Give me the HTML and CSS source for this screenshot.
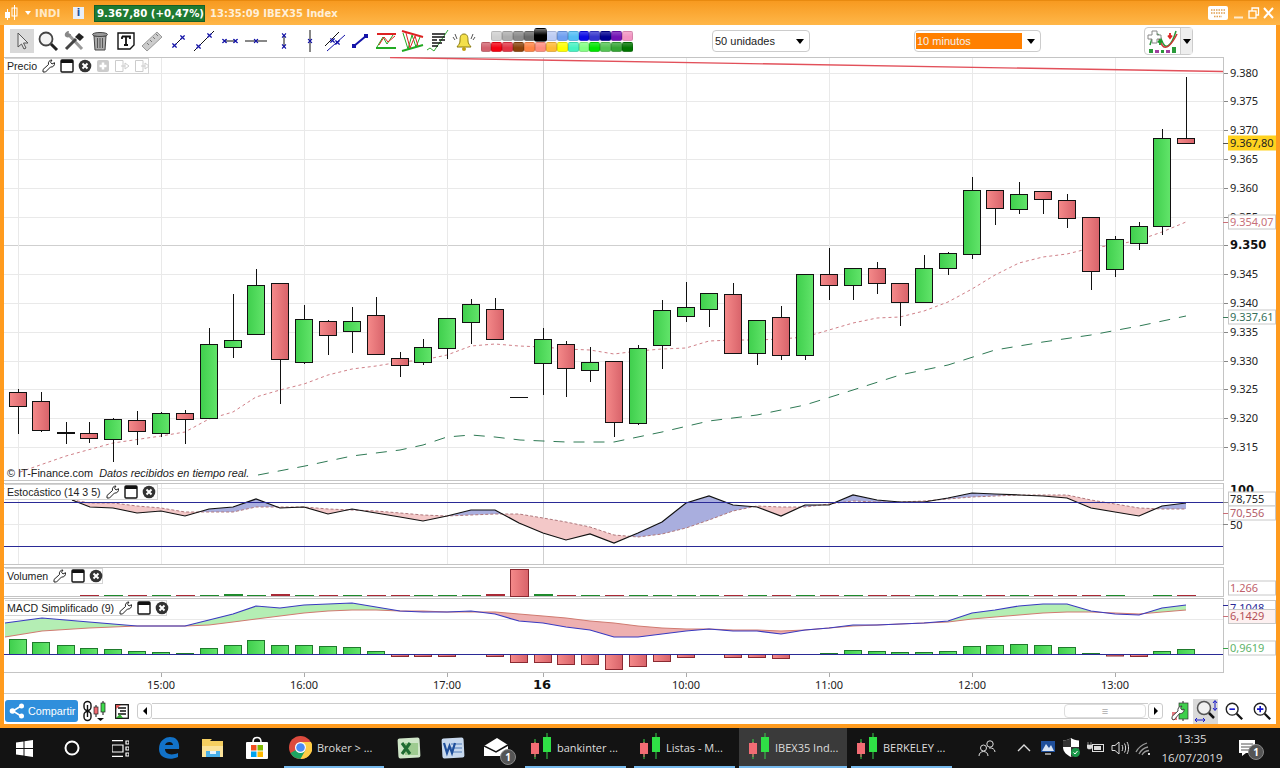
FILE: index.html
```html
<!DOCTYPE html>
<html lang="es">
<head>
<meta charset="utf-8">
<title>IBEX35 Index</title>
<link rel="stylesheet" href="styles.css">
</head>
<body>
<svg class="defs" width="0" height="0" aria-hidden="true">
  <defs>
    <linearGradient id="gr" x1="0" x2="1" y1="0" y2="0"><stop offset="0" stop-color="#f58a8a"/><stop offset="1" stop-color="#d8636a"/></linearGradient>
    <linearGradient id="gg" x1="0" x2="1" y1="0" y2="0"><stop offset="0" stop-color="#3fcf4d"/><stop offset="1" stop-color="#62e46a"/></linearGradient>
    <symbol id="star" viewBox="0 0 6 6"><path d="M.5 .5L5.500 5.500M5.500 .5L.5 5.500" stroke="#1414a8" stroke-width="1.500" fill="none"/></symbol>
    <symbol id="wrench" viewBox="0 0 14 14"><path d="M1 13L1 10.500L6.500 5.500C5.800 3 7.500 1 10 1L8.500 3.200L10 5L12.500 3.700C13 6.500 10.800 8.500 8.500 8L3.500 13Z" fill="#fff" stroke="#222" stroke-width="1"/></symbol>
    <symbol id="win" viewBox="0 0 14 14"><rect x="1" y="1" width="12" height="12" rx="1" fill="#fff" stroke="#111" stroke-width="1.400"/><rect x="1" y="1" width="12" height="3" fill="#111"/></symbol>
    <symbol id="cls" viewBox="0 0 14 14"><circle cx="7" cy="7" r="6.300" fill="#333"/><path d="M4.500 4.500L9.500 9.500M9.500 4.500L4.500 9.500" stroke="#fff" stroke-width="2"/></symbol>
    <symbol id="pair" viewBox="0 0 22 28"><path d="M5 6V26M17 0V26" stroke="#39d44a" stroke-width="1"/><path d="M5 9V24" stroke="#f06a72" stroke-width="1"/><rect x="1" y="10" width="8" height="11" fill="#f26c74"/><rect x="13" y="4" width="8" height="15" fill="#2fe046"/></symbol>
  </defs>
</svg>

<div class="window">
  <header class="titlebar">
    <svg class="t-logo" width="15" height="18" viewBox="0 0 15 18"><path d="M3.500 5V16M10.500 1V16" stroke="#fff"/><rect x="1" y="8" width="5" height="6" fill="#fff"/><rect x="8" y="4" width="5" height="8" fill="none" stroke="#fff"/></svg>
    <span class="t-caret"></span>
    <span class="t-name">INDI</span>
    <span class="t-info">i</span>
    <span class="t-price">9.367,80 (+0,47%)</span>
    <span class="t-text">13:35:09 IBEX35 Index</span>
    <svg class="t-kbd" width="20" height="14" viewBox="0 0 20 14"><rect width="20" height="14" rx="2" fill="#fff"/><path d="M3 4h14M3 7h14M6 10.500h8" stroke="#e0a050" stroke-width="1.500" stroke-dasharray="1.500 1"/></svg>
    <svg class="t-ctrl" width="44" height="14" viewBox="0 0 44 14"><path d="M2 11.500h9" stroke="#fff" stroke-width="2" opacity=".75"/><rect x="17" y="5" width="7" height="7" fill="none" stroke="#fff" stroke-width="1.300"/><path d="M20 5V2h6.500v7H24" fill="none" stroke="#fff" stroke-width="1.300"/><path d="M32 2L41 12M41 2L32 12" stroke="#fff" stroke-width="2"/></svg>
  </header>

  <main class="inner">
    <nav class="toolbar">
      <div class="tools">
        <span class="tool on"><svg width="20" height="20" viewBox="0 0 20 20"><path d="M6 2L6 16L9.500 13L12 18L14 17L11.500 12L16 12Z" fill="#e8e8e8" stroke="#555"/></svg></span>
        <span class="tool"><svg width="22" height="22" viewBox="0 0 22 22"><circle cx="9" cy="9" r="6.500" fill="#f4f4f4" stroke="#444" stroke-width="1.800"/><path d="M14 14L20 20" stroke="#222" stroke-width="3"/></svg></span>
        <span class="tool"><svg width="22" height="22" viewBox="0 0 22 22"><path d="M4 3L19 19" stroke="#999" stroke-width="3"/><path d="M2 6C1 3 4 1 6 1L5 4L8 4C8 7 5 8 3 7Z" fill="#888"/><path d="M12 7L16 3L21 7L17 11Z" fill="#222"/><path d="M13 9L3 19" stroke="#444" stroke-width="3"/></svg></span>
        <span class="tool"><svg width="20" height="22" viewBox="0 0 20 22"><path d="M4 6H16L15 20H5Z" fill="#aaa" stroke="#444"/><path d="M7.500 8V18M10 8V18M12.500 8V18" stroke="#555"/><ellipse cx="10" cy="4.500" rx="7.500" ry="2" fill="#999" stroke="#444"/></svg></span>
        <span class="tool"><svg width="20" height="20" viewBox="0 0 20 20"><path d="M2 2H18V14L14 18H2Z" fill="#fff" stroke="#111" stroke-width="1.400"/><path d="M6 5.500H14V8M10 5.500V14M8 14H12M6 5.500V8" stroke="#111" stroke-width="1.800" fill="none"/></svg></span>
        <span class="tool"><svg width="22" height="22" viewBox="0 0 22 22"><path d="M1 16L16 2L21 7L6 21Z" fill="#ccc" stroke="#999"/><path d="M6 13l2 2M9 10l2 2M12 7l2 2M15 4l2 2" stroke="#777"/></svg></span>
        <span class="tool"><svg width="24" height="24" viewBox="0 0 24 24"><path d="M7 18L17 8" stroke="#111"/><use href="#star" x="6" y="14" width="5" height="5"/><use href="#star" x="14" y="6" width="5" height="5"/></svg></span>
        <span class="tool"><svg width="24" height="24" viewBox="0 0 24 24"><path d="M2 22L22 2" stroke="#111"/><use href="#star" x="4" y="15" width="5" height="5"/><use href="#star" x="15" y="4" width="5" height="5"/></svg></span>
        <span class="tool"><svg width="24" height="24" viewBox="0 0 24 24"><path d="M6 12H18" stroke="#111"/><use href="#star" x="4" y="9.500" width="5" height="5"/><use href="#star" x="15" y="9.500" width="5" height="5"/></svg></span>
        <span class="tool"><svg width="24" height="24" viewBox="0 0 24 24"><path d="M1 12H23" stroke="#111"/><use href="#star" x="9.500" y="9.500" width="5" height="5"/></svg></span>
        <span class="tool"><svg width="24" height="24" viewBox="0 0 24 24"><path d="M14 6V18" stroke="#111"/><use href="#star" x="11.500" y="4" width="5" height="5"/><use href="#star" x="11.500" y="15" width="5" height="5"/></svg></span>
        <span class="tool"><svg width="24" height="24" viewBox="0 0 24 24"><path d="M14 1V23" stroke="#111"/><use href="#star" x="11.500" y="9.500" width="5" height="5"/></svg></span>
        <span class="tool"><svg width="24" height="24" viewBox="0 0 24 24"><path d="M3 17L17 3" stroke="#111"/><path d="M5 22L23 6" stroke="#1414a8"/><use href="#star" x="8" y="9" width="5" height="5"/><use href="#star" x="13" y="11" width="5" height="5"/></svg></span>
        <span class="tool"><svg width="24" height="24" viewBox="0 0 24 24"><path d="M6 17L18 7" stroke="#1414a8" stroke-width="2"/><rect x="4" y="15" width="4" height="4" fill="#1414a8"/><rect x="16" y="5" width="4" height="4" fill="#1414a8"/></svg></span>
        <span class="tool"><svg width="24" height="24" viewBox="0 0 24 24"><path d="M3 5H22" stroke="#d22" stroke-width="2"/><path d="M2 19H22" stroke="#2a2" stroke-width="2"/><path d="M3 18L9 8L13 15L19 6" stroke="#2a2" fill="none"/><path d="M5 16L10 8L14 13L21 7" stroke="#d22" fill="none"/></svg></span>
        <span class="tool"><svg width="24" height="24" viewBox="0 0 24 24"><path d="M2 2L23 8" stroke="#d22" stroke-width="2"/><path d="M2 22L23 16" stroke="#2a2" stroke-width="2"/><path d="M3 4L8 20L12 6L16 18L20 8" stroke="#2a2" fill="none"/><path d="M6 4L10 19L15 7L18 17" stroke="#d22" fill="none"/></svg></span>
        <span class="tool"><svg width="24" height="24" viewBox="0 0 24 24"><path d="M1 21L4 19L8 22L22 1" stroke="#3a3" fill="none"/><path d="M6 5H19M6 8H19M6 11H11M13 11H19M6 14H16M6 17H12" stroke="#111" stroke-width="1.300"/></svg></span>
        <span class="tool"><svg width="24" height="24" viewBox="0 0 24 24"><path d="M12 5C8 5 8 9 8 12C8 15 6 16 5 18H19C18 16 16 15 16 12C16 9 16 5 12 5Z" fill="#f4e04a" stroke="#8a7a10"/><circle cx="12" cy="20" r="2" fill="#c0a010"/><path d="M3 5l2 5M21 5l-2 5M1 8l2 3M23 8l-2 3" stroke="#555"/></svg></span>
      </div>
      <div class="palette">
        <div class="pal-row top">
          <i class="c01"></i><i class="c02"></i><i class="c03"></i><i class="c04"></i><i class="c05 sel"></i><i class="c06"></i><i class="c07"></i><i class="c08"></i><i class="c09"></i><i class="c10"></i><i class="c11"></i><i class="c12"></i><i class="c13"></i>
        </div>
        <div class="pal-row">
          <i class="d01"></i><i class="d02"></i><i class="d03"></i><i class="d04"></i><i class="d05"></i><i class="d06"></i><i class="d07"></i><i class="d08"></i><i class="d09"></i><i class="d10"></i><i class="d11"></i><i class="d12"></i><i class="d13"></i><i class="d14"></i>
        </div>
      </div>
      <div class="select sel-units"><span class="sel-text">50 unidades</span><b class="sel-arrow"></b></div>
      <div class="select sel-time"><span class="sel-text hot">10 minutos</span><b class="sel-arrow"></b></div>
      <div class="indic-btn">
        <svg width="32" height="26" viewBox="0 0 32 26"><path d="M3 17C7 2 12 4 15 13C18 22 24 20 29 3" stroke="#2a9a3a" stroke-width="1.500" fill="none"/><path d="M3 11C8 4 11 8 15 17C19 23 25 16 30 6" stroke="#c33" stroke-width="1.500" fill="none"/><path d="M1 7H5V3H10V7H14V11H10V15H5V11H1Z" fill="#fff" stroke="#888"/><path d="M13 17V13M11 14.500L13 12L15 14.500" stroke="#1a9a2a" stroke-width="1.800" fill="none"/><path d="M23 5V9M21 7.500L23 10L25 7.500" stroke="#d22" stroke-width="1.800" fill="none"/><path d="M2 21h4v4H2zM8 22h4v3H8zM14 22h3v3h-3zM19 22h4v3h-4zM25 19h4v6h-4z" fill="#2a9a3a"/><path d="M8 22h4v3H8zM19 22h4v3h-4z" fill="#a040a0"/></svg>
        <span class="btn-split"><b class="sel-arrow"></b></span>
      </div>
    </nav>

    <section class="charts" id="charts">
      <div class="panel p-price" data-panel="price">
        <div class="legend"><span class="lg-name">Precio</span>
          <svg class="li" viewBox="0 0 14 14"><use href="#wrench"/></svg><svg class="li" viewBox="0 0 14 14"><use href="#win"/></svg><svg class="li" viewBox="0 0 14 14"><use href="#cls"/></svg>
          <svg class="li" viewBox="0 0 14 14"><rect x="1" y="1" width="12" height="12" rx="2" fill="#ccc"/><path d="M7 3.500V10.500M3.500 7H10.500" stroke="#fff" stroke-width="2.500"/></svg>
          <svg class="li wide" viewBox="0 0 16 14"><path d="M1.500 1.500H9V12.500H1.500ZM7 7H11V4L15 7L11 10V7" fill="#fff" stroke="#ccc"/></svg>
          <svg class="li wide" viewBox="0 0 16 14"><path d="M1.500 1.500H9V12.500H1.500ZM7 7H11V4L15 7L11 10V7" fill="#fff" stroke="#ccc"/></svg>
        </div>
        <div class="credit">© IT-Finance.com&nbsp; <em>Datos recibidos en tiempo real.</em></div>
      </div>
      <div class="panel p-stoch" data-panel="stoch">
        <div class="legend"><span class="lg-name">Estocástico (14 3 5)</span><svg class="li" viewBox="0 0 14 14"><use href="#wrench"/></svg><svg class="li" viewBox="0 0 14 14"><use href="#win"/></svg><svg class="li" viewBox="0 0 14 14"><use href="#cls"/></svg></div>
      </div>
      <div class="panel p-vol" data-panel="vol">
        <div class="legend"><span class="lg-name">Volumen</span><svg class="li" viewBox="0 0 14 14"><use href="#wrench"/></svg><svg class="li" viewBox="0 0 14 14"><use href="#win"/></svg><svg class="li" viewBox="0 0 14 14"><use href="#cls"/></svg></div>
      </div>
      <div class="panel p-macd" data-panel="macd">
        <div class="legend"><span class="lg-name">MACD Simplificado (9)</span><svg class="li" viewBox="0 0 14 14"><use href="#wrench"/></svg><svg class="li" viewBox="0 0 14 14"><use href="#win"/></svg><svg class="li" viewBox="0 0 14 14"><use href="#cls"/></svg></div>
      </div>
      <div class="panel p-axis" data-panel="axis"></div>
    </section>

    <footer class="footbar">
      <div class="share"><svg width="16" height="16" viewBox="0 0 16 16"><path d="M4 8L12 3M4 8L12 13" stroke="#fff" stroke-width="1.500"/><circle cx="3.500" cy="8" r="2.800" fill="#fff"/><circle cx="12.500" cy="3" r="2.500" fill="#fff"/><circle cx="12.500" cy="13" r="2.500" fill="#fff"/></svg><span>Compartir</span></div>
      <svg class="f-link" width="24" height="22" viewBox="0 0 24 22"><rect x="1" y="1.500" width="7" height="9" rx="3.500" fill="none" stroke="#111" stroke-width="1.400"/><rect x="1" y="11.500" width="7" height="9" rx="3.500" fill="none" stroke="#111" stroke-width="1.400"/><path d="M4.500 5V17" stroke="#111" stroke-width="1.400"/><path d="M13 5V17M20 1V15" stroke="#111"/><rect x="11" y="7" width="4" height="7" fill="#f06a72" stroke="#222" stroke-width=".7"/><rect x="18" y="3" width="4" height="9" fill="#3fdc4d" stroke="#222" stroke-width=".7"/><path d="M14 18H21L17.500 21Z" fill="#111"/></svg>
      <svg class="f-list" width="14" height="15" viewBox="0 0 14 15"><rect x=".7" y=".7" width="12.600" height="13.600" fill="#fff" stroke="#111" stroke-width="1.300"/><path d="M3 4H11M5 7H11M3 10H11" stroke="#111" stroke-width="1.300"/><path d="M1 1H6L1 5Z" fill="#d55"/><path d="M1 14L5 10L8 14Z" fill="#3a3"/></svg>
      <div class="scroll">
        <span class="sb-btn"><i class="tri-l"></i></span>
        <span class="sb-track"><span class="sb-thumb">≡</span></span>
        <span class="sb-btn"><i class="tri-r"></i></span>
      </div>
      <svg class="f-w" width="20" height="22" viewBox="0 0 20 22"><path d="M13 1V21" stroke="#222"/><rect x="9" y="3" width="9" height="16" fill="#3fcf4d" stroke="#333" stroke-width=".7"/><rect x="2" y="12" width="5" height="8" fill="#e87a82"/><path d="M2 19L2 16.500L8 11C7.400 8.500 9 6 12 6L10.500 8L12 10L14 9C14.500 12 12 14 9.500 13.500L4 20Z" fill="#fff" stroke="#333" stroke-width=".9"/></svg>
      <span class="f-zoom"><svg width="24" height="24" viewBox="0 0 24 24"><circle cx="10" cy="9" r="6.500" fill="#f0f0f0" stroke="#555" stroke-width="1.500"/><path d="M15 14L20 19" stroke="#111" stroke-width="2.500"/><path d="M21 2V11M19 4L21 1.500L23 4M19 9L21 11.500L23 9" stroke="#1414c8" fill="none"/><path d="M1 21H11M3 19L1 21L3 23M9 19L11 21L9 23" stroke="#1414c8" fill="none"/></svg></span>
      <span class="f-mag m1"><svg width="20" height="20" viewBox="0 0 22 22"><circle cx="9" cy="9" r="6.500" fill="#fff" stroke="#222" stroke-width="1.500"/><path d="M14 14L20 20" stroke="#111" stroke-width="2.500"/><path d="M6 9H12" stroke="#1414c8" stroke-width="1.800"/></svg></span>
      <span class="f-mag m2"><svg width="20" height="20" viewBox="0 0 22 22"><circle cx="9" cy="9" r="6.500" fill="#fff" stroke="#222" stroke-width="1.500"/><path d="M14 14L20 20" stroke="#111" stroke-width="2.500"/><path d="M5.500 9H12.500M9 5.500V12.500" stroke="#1414c8" stroke-width="1.800"/></svg></span>
    </footer>
  </main>
</div>

<div class="taskbar">
  <span class="s-sys"><svg width="17" height="17" viewBox="0 0 17 17"><path d="M0 2.500L7.500 1.400V8H0ZM8.500 1.300L17 0V8H8.500ZM0 9H7.500V15.600L0 14.500ZM8.500 9H17V17L8.500 15.800Z" fill="#fff"/></svg></span>
  <span class="s-sys"><svg width="16" height="16" viewBox="0 0 16 16"><circle cx="8" cy="8" r="6.500" fill="none" stroke="#fff" stroke-width="2"/></svg></span>
  <span class="s-sys"><svg width="17" height="17" viewBox="0 0 17 17"><path d="M0 .700H11M0 16.300H11M0 5V12H11V5ZM14 1h3v3h-3zM14 7h3v3h-3zM14 13h3v3h-3z" fill="none" stroke="#fff" stroke-width="1.200"/></svg></span>
  <span class="s-ico first"><svg width="22" height="24" viewBox="0 0 22 24"><path d="M21 13H7C7 18 13 20 20 17V21C11 25 1 22 1 13C1 4 8 1 12 1C18 1 22 5 21 13ZM7 9H15C15 5 8 5 7 9Z" fill="#1272c8"/></svg></span>
  <span class="s-ico"><svg width="22" height="20" viewBox="0 0 22 20"><path d="M0 3H8L10 1H0ZM0 3H21V19H0Z" fill="#f5cf60"/><path d="M0 8H21V19H0Z" fill="#fbe39a"/><rect x="4" y="13" width="14" height="6" fill="#4ab0e8"/><rect x="8" y="13" width="6" height="3" fill="#e8f4fc"/></svg></span>
  <span class="s-ico"><svg width="24" height="24" viewBox="0 0 24 24"><path d="M8 6C8 0 16 0 16 6" fill="none" stroke="#fff" stroke-width="1.500"/><rect x="1" y="6" width="22" height="17" rx="1" fill="#fff"/><rect x="6" y="9" width="5.500" height="5.500" fill="#f25022"/><rect x="12.500" y="9" width="5.500" height="5.500" fill="#7fba00"/><rect x="6" y="15.500" width="5.500" height="5.500" fill="#00a4ef"/><rect x="12.500" y="15.500" width="5.500" height="5.500" fill="#ffb900"/></svg></span>
  <span class="s-app chrome"><svg width="23" height="23" viewBox="0 0 23 23"><circle cx="11.500" cy="11.500" r="11.500" fill="#dd4b3e"/><path d="M11.500 11.500L1.500 17A11.500 11.500 0 0 0 11.500 23L17 15Z" fill="#1da462"/><path d="M11.500 6H22A11.500 11.500 0 0 1 11.500 23L17 13Z" fill="#ffcd46"/><circle cx="11.500" cy="11.500" r="5.500" fill="#fff"/><circle cx="11.500" cy="11.500" r="4.300" fill="#4c8bf5"/></svg><span>Broker &gt; ...</span></span>
  <span class="s-ico"><svg width="24" height="24" viewBox="0 0 24 24"><rect x="1" y="2" width="22" height="20" rx="2" fill="#cfe6c8" transform="rotate(-3 12 12)"/><rect x="8" y="7" width="13" height="12" fill="#9ecb90"/><path d="M5 7L13 18M13 7L5 18" stroke="#1f6b32" stroke-width="3"/></svg></span>
  <span class="s-ico"><svg width="24" height="24" viewBox="0 0 24 24"><rect x="1" y="2" width="22" height="20" rx="2" fill="#c8d9ee" transform="rotate(-3 12 12)"/><path d="M10 8H21M10 12H21M10 16H21" stroke="#7a9ccc" stroke-width="1.500"/><path d="M3 7L6 17L8.500 10L11 17L14 7" fill="none" stroke="#1f4f9b" stroke-width="2.200"/></svg></span>
  <span class="s-ico mail"><svg width="26" height="20" viewBox="0 0 26 20"><path d="M0 8L13 0L24 7V18H0Z" fill="#fff"/><path d="M0 8L12 14L24 7" fill="none" stroke="#111" stroke-width="1.500"/></svg><b class="badge">1</b></span>
  <span class="s-app a1"><svg width="22" height="28" viewBox="0 0 22 28"><use href="#pair"/></svg><span>bankinter ...</span></span>
  <span class="s-app a2"><svg width="22" height="28" viewBox="0 0 22 28"><use href="#pair"/></svg><span>Listas - M...</span></span>
  <span class="s-app a3"><svg width="22" height="28" viewBox="0 0 22 28"><use href="#pair"/></svg><span>IBEX35 Ind...</span></span>
  <span class="s-app a4"><svg width="22" height="28" viewBox="0 0 22 28"><use href="#pair"/></svg><span>BERKELEY ...</span></span>
  <span class="s-people"><svg width="18" height="18" viewBox="0 0 18 18"><circle cx="12" cy="5" r="3.200" fill="none" stroke="#ddd"/><circle cx="5.500" cy="9" r="3" fill="none" stroke="#ddd"/><path d="M1 17C1 11 10 11 10 17M11 9C14 8.500 17 10 17 13" fill="none" stroke="#ddd"/></svg></span>
  <span class="s-tray chev"><svg width="14" height="8" viewBox="0 0 14 8"><path d="M1 7L7 1L13 7" fill="none" stroke="#ddd" stroke-width="1.400"/></svg></span>
  <span class="s-tray"><svg width="16" height="16" viewBox="0 0 16 16"><rect x="1" y="1" width="14" height="11" fill="#1f4f9b"/><path d="M2 11L6 4L9 8L11 5L14 11Z" fill="#d8e4f4"/><path d="M5 14H11" stroke="#bbb" stroke-width="1.500"/></svg></span>
  <span class="s-tray"><svg width="18" height="20" viewBox="0 0 18 20"><path d="M8 0C10 1.500 13 2.500 16 2.500V9C16 14 12 17 8 19C4 17 0 14 0 9V2.500C3 2.500 6 1.500 8 0Z" fill="#fff"/><path d="M8 0V9H0V2.500C3 2.500 6 1.500 8 0ZM8 9H16C16 14 12 17 8 19Z" fill="#333"/><circle cx="12.500" cy="14.500" r="4.500" fill="#1a9a4a"/><path d="M10.500 14.500L12 16L14.500 13" stroke="#fff" fill="none"/></svg></span>
  <span class="s-tray"><svg width="18" height="14" viewBox="0 0 18 14"><rect x="5.500" y="3.500" width="11" height="7" fill="none" stroke="#ddd"/><rect x="7" y="5" width="7" height="4" fill="#ddd"/><path d="M1 1V4M4 1V4M0 4H5V6C5 7.500 4 8 2.500 8C1 8 0 7.500 0 6Z" fill="#ddd" stroke="#ddd" stroke-width=".6"/></svg></span>
  <span class="s-tray"><svg width="18" height="16" viewBox="0 0 18 16"><path d="M1 5.500H4L8 2V14L4 10.500H1Z" fill="none" stroke="#ddd"/><path d="M11 5C12 7 12 9 11 11M13.500 3.500C15 6 15 10 13.500 12.500M16 2C18 5.500 18 10.500 16 14" fill="none" stroke="#ddd"/></svg></span>
  <span class="s-tray"><svg width="18" height="16" viewBox="0 0 18 16"><path d="M1 12C3 8 6 5 12 3M4 14C6 10 8 8 13 7M7 15C8 13 10 11 14 10.500" fill="none" stroke="#999" stroke-width="1.300"/><path d="M13 13h2v2h-2z" fill="#ddd"/></svg></span>
  <span class="s-clock"><span>13:35</span><span>16/07/2019</span></span>
  <span class="s-notif"><svg width="16" height="16" viewBox="0 0 16 16"><path d="M0 0H16V13H7L3 16V13H0Z" fill="#fff"/><path d="M2 4H14M2 7H14M2 10H10" stroke="#555" stroke-width="1"/></svg><b class="badge">1</b></span>
</div>
<script src="chart.js"></script>
</body>
</html>
```
FILE: styles.css
```css
* { box-sizing: border-box; }
html, body { margin: 0; padding: 0; }
body { width: 1280px; height: 768px; overflow: hidden; background: #111; font-family: "Liberation Sans", "Noto Sans", sans-serif; font-size: 11px; color: #111; }
.defs { position: absolute; }
svg { display: block; flex: none; }

.window { height: 728px; padding: 0 4px 4px; display: flex; flex-direction: column; background: #ff9b1e; }
.titlebar { height: 25px; margin: 0 -4px; padding-left: 4px; display: flex; align-items: center; background: linear-gradient(#f79a20, #ffb749); border-top: 1px solid #e88a10; color: #fff; font-family: "DejaVu Sans", sans-serif; font-weight: 700; font-size: 10px; }
.t-caret { width: 0; height: 0; margin-left: 6px; border: 3px solid transparent; border-top: 4px solid #fff; border-bottom: 0; }
.t-name { margin-left: 4px; width: 38px; color: #ffe9c8; font-size: 10.500px; }
.t-info { width: 11px; height: 12px; line-height: 12px; text-align: center; background: #e8eef8; color: #1f4f9b; }
.t-price { margin-left: 10px; width: 111px; height: 17px; line-height: 15px; padding-left: 2px; background: #1f7a32; border: 1px solid #14602a; white-space: nowrap; font-size: 10.200px; }
.t-text { margin-left: 5px; color: #ffefd8; }
.t-kbd { margin-left: auto; }
.t-ctrl { margin: 0 4px 0 4px; }

.inner { flex: 1; display: flex; flex-direction: column; background: #fff; min-height: 0; }
.toolbar { height: 32px; flex: none; display: flex; align-items: center; padding-left: 6px; }
.tools { display: flex; gap: 2px; }
.tool { width: 24px; height: 24px; display: flex; align-items: center; justify-content: center; }
.tool.on { background: #d9d9d9; }

.palette { margin-left: 4px; width: 153px; display: flex; flex-direction: column; align-items: flex-end; gap: 1px; }
.pal-row { display: flex; height: 10px; }
.pal-row i { width: 10.9px; height: 10px; border: 1px solid rgba(0,0,0,.12); border-radius: 2px; background-image: linear-gradient(rgba(255,255,255,.22), rgba(255,255,255,0) 60%); }
.pal-row i.sel { width: 13px; height: 14px; margin: -3px -1px 0; position: relative; background: linear-gradient(#777, #000 50%); border-radius: 3px; }
.c01{background-color:#d0d0d0}.c02{background-color:#adadad}.c03{background-color:#8a8a8a}.c04{background-color:#6a6a6a}.c05{background-color:#000}.c06{background-color:#bccbf2}.c07{background-color:#6f9ff0}.c08{background-color:#52bdf5}.c09{background-color:#0a0ae6}.c10{background-color:#3636cc}.c11{background-color:#000090}.c12{background-color:#7212b4}.c13{background-color:#f294c2}
.d01{background-color:#d2626e}.d02{background-color:#f40010}.d03{background-color:#e23444}.d04{background-color:#8a420a}.d05{background-color:#ff8444}.d06{background-color:#ff8c7c}.d07{background-color:#ffba34}.d08{background-color:#ffff00}.d09{background-color:#44f2c2}.d10{background-color:#84ff84}.d11{background-color:#00e400}.d12{background-color:#54c454}.d13{background-color:#34a434}.d14{background-color:#007400}

.select { height: 22px; display: flex; align-items: center; justify-content: space-between; border: 1px solid #ccc; border-radius: 4px; background: #fff; padding: 0 5px 0 1px; }
.sel-units { width: 98px; margin-left: 79px; }
.sel-time { width: 127px; margin-left: 104px; }
.sel-text { padding-left: 1px; color: #222; }
.sel-text.hot { width: 106px; height: 16px; line-height: 16px; padding-left: 1px; background: #ff8000; color: #f2f2f2; }
.sel-arrow { display: block; width: 0; height: 0; border: 4px solid transparent; border-top: 5px solid #000; border-bottom: 0; }
.indic-btn { margin-left: 103px; width: 49px; height: 28px; display: flex; align-items: center; border: 1px solid #ccc; border-radius: 4px; padding-left: 2px; background: #fff; }
.btn-split { flex: 1; height: 100%; margin-left: 1px; display: flex; align-items: center; justify-content: center; border-left: 1px solid #ccc; background: #eee; }

.charts { height: 636px; flex: none; display: flex; flex-direction: column; }
.panel { position: relative; flex: none; width: 1272px; }
.p-price { height: 424px; }
.p-stoch { height: 85px; }
.p-vol { height: 32px; }
.p-macd { height: 75px; }
.p-axis { height: 20px; }
.panel svg.plot { position: absolute; left: 0; top: 0; }

.legend { position: absolute; z-index: 2; left: 1px; display: flex; align-items: center; height: 16px; padding: 0 0 0 2px; gap: 4px; background: #fff; border: 1px solid #d4d4d4; border-left: 0; font-size: 10.600px; color: #222; white-space: nowrap; }
.lg-name { margin-right: 1px; }
.legend .li { width: 14px; height: 14px; }
.legend .li.wide { width: 16px; }
.p-price .legend { top: 1px; width: 144px; }
.p-stoch .legend { top: 3px; width: 153px; }
.p-vol .legend { top: 2px; width: 98px; }
.p-macd .legend { top: 2px; width: 162px; }
.credit { position: absolute; z-index: 2; left: 3px; top: 410px; font-size: 10.900px; color: #222; white-space: nowrap; }
.credit em { font-style: italic; }

svg text { font-family: "Noto Sans", "Liberation Sans", sans-serif; font-size: 11px; fill: #222; }
svg text.big { font-family: "DejaVu Sans", sans-serif; font-weight: 700; font-size: 11.500px; fill: #111; }
svg text.day { font-family: "DejaVu Sans", sans-serif; font-weight: 700; font-size: 13px; fill: #111; }

.footbar { flex: 1; display: flex; align-items: center; padding: 4px 0 0 1px; border-top: 1px solid #ccc; }
.share { width: 73px; height: 22px; flex: none; display: flex; align-items: center; gap: 3px; padding-left: 4px; background: #2f8fdc; border-radius: 3px; color: #fff; font-size: 10.800px; white-space: nowrap; overflow: hidden; }
.f-link { margin-left: 5px; }
.f-list { margin-left: 8px; }
.scroll { width: 1026px; height: 16px; margin-left: 8px; display: flex; }
.sb-btn { width: 15px; display: flex; align-items: center; justify-content: center; border: 1px solid #ccc; border-radius: 3px; background: #fff; }
.tri-l, .tri-r { width: 0; height: 0; border: 4px solid transparent; }
.tri-l { border-right-color: #000; border-left: 0; }
.tri-r { border-left-color: #000; border-right: 0; }
.sb-track { flex: 1; display: flex; justify-content: flex-end; border-top: 1px solid #ccc; border-bottom: 1px solid #ccc; }
.sb-thumb { width: 82px; margin-right: 2px; text-align: center; line-height: 13px; color: #aaa; border: 1px solid #ddd; border-radius: 4px; background: #fff; }
.f-w { margin-left: 7px; }
.f-zoom { width: 25px; height: 25px; margin-left: 3px; display: flex; align-items: center; justify-content: center; background: #d9d9d9; }
.f-mag { display: flex; justify-content: center; }
.m1 { margin-left: 6px; }
.m2 { margin-left: 8px; }

.taskbar { height: 40px; display: flex; align-items: center; background: #131313; color: #ddd; font-family: "Open Sans", "Noto Sans", sans-serif; font-size: 11px; }
.taskbar span { white-space: nowrap; }
.s-sys { width: 48px; height: 40px; display: flex; align-items: center; justify-content: center; }
.s-ico { width: 44px; height: 40px; display: flex; align-items: center; justify-content: center; position: relative; }
.s-ico.first { margin-left: 3px; }
.s-app { height: 40px; display: flex; align-items: center; gap: 5px; padding-left: 5px; border-bottom: 2px solid #76b9ed; }
.s-app.chrome { width: 100px; margin: 0 3px 0 5px; }
.a1 { width: 101px; margin: 0 8px 0 6px; }
.a2 { width: 101px; margin-right: 4px; }
.a3 { width: 108px; margin-right: 4px; padding-left: 9px; background: #3a3a3a; }
.a4 { width: 101px; }
.s-people { width: 36px; margin-left: 17px; display: flex; justify-content: center; }
.s-tray { width: 24px; display: flex; justify-content: center; align-items: center; }
.s-tray.chev { margin-left: 7px; }
.s-clock { width: 64px; margin-left: 4px; display: flex; flex-direction: column; align-items: center; line-height: 19px; font-size: 11.500px; }
.s-notif { width: 40px; margin-left: 3px; display: flex; justify-content: center; position: relative; }
.badge { position: absolute; width: 16px; height: 16px; line-height: 14px; text-align: center; border-radius: 50%; background: #555; border: 1px solid #888; color: #fff; font-size: 10px; font-weight: 700; }
.mail .badge { right: 3px; bottom: 3px; }
.s-notif .badge { left: 21px; top: 4px; }
```
FILE: chart.js
```js
(function () {
  var C = [
    [18,389,434,392,406,'r'],[41,392,432,401,430,'r'],[66,422,444,433,433,'d'],[89,422,443,433,438,'r'],
    [113,418,462,419,439,'g'],[137,411,445,420,431,'r'],[161,412,437,413,433,'g'],[185,410,444,413,419,'r'],
    [209,328,419,344,418,'g'],[233,294,358,340,347,'g'],[256,269,334,285,334,'g'],[280,283,404,283,359,'r'],
    [304,305,364,319,362,'g'],[328,320,355,321,335,'r'],[352,307,353,321,331,'g'],[376,297,355,315,354,'r'],
    [400,352,377,358,365,'r'],[423,339,365,347,362,'g'],[447,318,359,318,348,'g'],[471,299,344,304,322,'g'],
    [495,298,340,309,339,'r'],[519,397,397,397,397,'d'],[543,328,395,339,363,'g'],[566,341,397,344,368,'r'],
    [590,347,382,362,370,'g'],[614,361,437,361,422,'r'],[638,345,425,348,423,'g'],[662,300,369,310,345,'g'],
    [686,282,322,307,316,'g'],[709,293,327,293,309,'g'],[733,283,354,294,353,'r'],[757,320,365,320,353,'g'],
    [781,306,360,317,355,'r'],[805,274,360,274,355,'g'],[829,248,300,274,285,'r'],[853,268,300,268,285,'g'],
    [877,262,294,268,283,'r'],[900,283,326,283,302,'r'],[924,255,303,268,302,'g'],[948,252,275,253,268,'g'],
    [972,177,259,190,254,'g'],[995,190,225,190,208,'r'],[1019,182,214,194,209,'g'],[1043,191,214,191,199,'r'],
    [1067,194,228,200,218,'r'],[1091,217,290,217,271,'r'],[1115,236,277,239,269,'g'],[1139,222,250,226,243,'g'],
    [1162,129,235,138,226,'g'],[1186,77,144,138,143,'r']
  ];
  var maRed = [[20,472],[66,456],[113,443],[161,436],[185,432],[209,419],[233,412],[256,397],[280,390],[304,384],[328,375],[352,369],[376,366],[400,362],[423,360],[447,355],[471,346],[495,344],[519,346],[543,347],[566,349],[590,350],[614,354],[638,351],[662,349],[686,348],[709,341],[733,340],[757,340],[781,339],[805,337],[829,330],[853,323],[877,318],[900,317],[924,311],[948,302],[972,289],[995,275],[1019,263],[1043,257],[1067,254],[1091,248],[1115,245],[1139,240],[1162,232],[1186,222]];
  var maGreen = [[258,475],[305,466],[352,456],[400,450],[423,445],[447,437],[471,435],[495,437],[520,440],[566,442],[614,442],[662,432],[709,421],[757,415],[805,405],[853,390],[900,375],[948,365],[995,350],[1043,342],[1091,335],[1139,326],[1186,316]];
  var stK = [500,507,508,513,511,516,509,507,499,508,507,514,509,513,517,521,516,510,510,523,533,540,534,543,533,522,503,496,505,507,516,505,505,495,500,502,502,498,493,494,495,496,498,508,512,516,506,503];
  var stD = [500,503,503,506,508,512,512,512,507,507,507,509,510,511,513,515,516,515,514,514,518,522,527,535,537,534,528,520,511,506,507,507,504,501,502,502,501,499,497,496,495,495,495,500,504,508,509,509];
  var stX = [72,90,113,137,161,185,209,233,256,280,304,328,352,376,400,423,447,471,495,519,543,566,590,614,638,662,686,709,733,757,781,805,829,853,877,900,924,948,972,995,1019,1043,1067,1091,1115,1139,1162,1186];
  var mX = [5,42,89,137,185,209,233,256,280,304,328,352,376,400,423,447,471,495,519,543,566,590,614,638,662,686,709,733,757,781,805,829,853,877,900,924,948,972,995,1019,1043,1067,1091,1115,1139,1162,1186];
  var mB = [623,618,622,626,626,620,614,606,608,605,604,603,607,611,612,612,611,614,621,623,627,630,637,637,634,631,629,631,631,634,630,628,625,625,624,623,621,613,610,606,604,604,611,614,615,608,605];
  var mR = [637,631,628,626,626,625,622,619,616,613,611,610,610,611,611,612,612,612,614,616,618,621,623,626,628,629,629,630,630,631,630,628,626,625,624,623,622,619,617,615,613,612,612,613,614,612,610];
  var hist = [639,642,645,648,649,651,652,653,648,645,640,645,645,646,647,651,656,656,656,0,656,662,662,664,664,669,666,661,657,0,657,657,658,0,653,650,651,652,652,651,646,645,644,645,647,653,655.5,656,651,649];
  var volH = [0,0,0,1,1,1,1,1,1,2,1,2,1,1,1,1,1,1,1,1,2,27,2,1,1,1,1,1,1,1,1,1,1,1,1,1,1,1,1,1,1,1,1,1,1,1,1,0,1,1];

  function line(x1, y1, x2, y2, col, extra) {
    return '<line x1="' + x1 + '" y1="' + y1 + '" x2="' + x2 + '" y2="' + y2 + '" stroke="' + col + '"' + (extra || '') + '/>';
  }
  function poly(pts, col, extra) {
    return '<polyline fill="none" points="' + pts.map(function (p) { return p.join(','); }).join(' ') + '" stroke="' + col + '"' + (extra || '') + '/>';
  }
  function zip(x, y) { return x.map(function (v, i) { return [v, y[i]]; }); }
  function fills(x, a, b, up, down) {
    var s = '';
    for (var i = 0; i < x.length - 1; i++) {
      var d0 = a[i] - b[i], d1 = a[i + 1] - b[i + 1];
      if (d0 * d1 < 0) {
        var t = d0 / (d0 - d1), cx = x[i] + t * (x[i + 1] - x[i]), cy = a[i] + t * (a[i + 1] - a[i]);
        s += '<polygon fill="' + (d0 < 0 ? up : down) + '" points="' + x[i] + ',' + a[i] + ' ' + cx + ',' + cy + ' ' + x[i] + ',' + b[i] + '"/>';
        s += '<polygon fill="' + (d1 < 0 ? up : down) + '" points="' + cx + ',' + cy + ' ' + x[i + 1] + ',' + a[i + 1] + ' ' + x[i + 1] + ',' + b[i + 1] + '"/>';
      } else {
        s += '<polygon fill="' + (d0 + d1 < 0 ? up : down) + '" points="' + x[i] + ',' + a[i] + ' ' + x[i + 1] + ',' + a[i + 1] + ' ' + x[i + 1] + ',' + b[i + 1] + ' ' + x[i] + ',' + b[i] + '"/>';
      }
    }
    return s;
  }
  function tag(y, w, txt, col, bg, noBorder) {
    return '<rect x="1228.5" y="' + (y - 7) + '" width="' + w + '" height="14" fill="' + bg + '" stroke="' + (noBorder ? bg : '#c8c8c8') + '"/>' +
      '<text x="1230" y="' + (y + 4) + '" style="fill:' + col + '">' + txt + '</text>';
  }
  function frame(y0, y1) {
    return '<rect x="3.500" y="' + y0 + '.5" width="1220" height="' + (y1 - y0) + '" fill="none" stroke="#c4c4c4"/>';
  }
  var G = '#e9e9e9', G2 = '#cfcfcf', NAVY = '#2a2a96';
  var vg = [18, 161, 304, 447, 686, 829, 972, 1115];

  function price() {
    var s = '';
    var levels = [['9.380',73],['9.375',101],['9.370',130],['9.365',159],['9.360',188],['9.355',217],['9.350',245],['9.345',274],['9.340',303],['9.335',332],['9.330',361],['9.325',389],['9.320',418],['9.315',447]];
    levels.forEach(function (l) {
      s += line(4, l[1] + .5, 1223, l[1] + .5, l[0] === '9.350' ? G2 : G);
      s += line(1223, l[1] + .5, 1228, l[1] + .5, '#888');
    });
    vg.forEach(function (x) { s += line(x + .5, 57, x + .5, 480, G); });
    s += line(543.5, 57, 543.5, 480, G2);
    s += frame(57, 480);
    s += line(390, 57.5, 1223, 71.5, '#e2505a', ' stroke-width="1.300"');
    s += poly(maRed, '#d08088', ' stroke-dasharray="3 3"');
    s += poly(maGreen, '#2f7a55', ' stroke-dasharray="11 9"');
    C.forEach(function (c) {
      var x = c[0] + .5;
      if (c[5] === 'd') {
        if (c[0] === 519) { s += line(510, 397.5, 528, 397.5, '#111'); return; }
        s += line(x, c[1], x, c[2], '#111');
        s += '<rect x="' + (c[0] - 9) + '" y="432" width="18" height="2" fill="#111"/>';
        return;
      }
      s += line(x, c[1], x, c[2], '#111');
      s += '<rect x="' + (c[0] - 8.5) + '" y="' + (c[3] + .5) + '" width="17" height="' + (c[4] - c[3]) + '" fill="url(#g' + c[5] + ')" stroke="#111"/>';
    });
    levels.forEach(function (l) {
      if (l[0] === '9.350') s += '<text class="big" x="1230" y="' + (l[1] + 4) + '">' + l[0] + '</text>';
      else s += '<text x="1230" y="' + (l[1] + 4) + '">' + l[0] + '</text>';
    });
    s += line(1223, 143.5, 1228, 143.5, '#555') + line(1223, 222.5, 1228, 222.5, '#c87078') + line(1223, 317.5, 1228, 317.5, '#3a7a5a');
    s += tag(143, 47, '9.367,80', '#222', '#ffd21f', true);
    s += tag(222, 47, '9.354,07', '#c8707a', '#fff');
    s += tag(317, 47, '9.337,61', '#35705a', '#fff');
    return s;
  }

  function stoch() {
    var s = '';
    s += line(4, 488.5, 1223, 488.5, G) + line(4, 524.5, 1223, 524.5, G);
    vg.forEach(function (x) { s += line(x + .5, 484, x + .5, 564, G); });
    s += line(543.5, 484, 543.5, 564, G2);
    s += frame(483, 564);
    s += fills(stX, stK, stD, '#a9aede', '#f3c8c8');
    s += poly(zip(stX, stD), '#b0787c', ' stroke-dasharray="3 2"');
    s += poly(zip(stX, stK), '#111', ' stroke-width="1.200"');
    s += line(4, 502.5, 1223, 502.5, NAVY) + line(4, 546.5, 1223, 546.5, NAVY);
    s += line(1223, 502.5, 1228, 502.5, '#888') + line(1223, 513.5, 1228, 513.5, '#c87078') + line(1223, 524.5, 1228, 524.5, '#888');
    s += '<text class="big" x="1230" y="494">100</text><text x="1230" y="529">50</text>';
    s += tag(499, 47, '78,755', '#222', '#fff');
    s += tag(513, 47, '70,556', '#b4606a', '#fff');
    return s;
  }

  function vol() {
    var s = '';
    s += frame(567, 596);
    C.forEach(function (c, i) {
      var h = volH[i];
      if (!h) return;
      var col = c[5] === 'g' ? '#1f8a2c' : '#a82a36';
      if (h > 3) s += '<rect x="' + (c[0] - 8.5) + '" y="' + (596.5 - h) + '" width="18" height="' + h + '" fill="url(#gr)" stroke="#8a2a32"/>';
      else s += '<rect x="' + (c[0] - 9) + '" y="' + (596 - h) + '" width="19" height="' + h + '" fill="' + col + '"/>';
    });
    s += tag(588, 47, '1.266', '#c0606a', '#fff');
    return s;
  }

  function macd() {
    var s = '';
    s += line(4, 619.5, 1223, 619.5, G);
    s += frame(598, 672);
    s += fills(mX, mB, mR, '#b4eeb4', '#eeb0b0');
    s += poly(zip(mX, mR), '#d07a70');
    s += poly(zip(mX, mB), '#3a3ac0', ' stroke-width="1.200"');
    C.forEach(function (c, i) {
      var y = hist[i];
      if (!y) return;
      var top = Math.min(y, 654), h = Math.abs(y - 654);
      var f = y < 654 ? 'url(#gg)' : 'url(#gr)', st = y < 654 ? '#1f7a2c' : '#8a2a32';
      s += '<rect x="' + (c[0] - 8.5) + '" y="' + (top + .5) + '" width="17" height="' + h + '" fill="' + f + '" stroke="' + st + '"/>';
    });
    s += line(4, 654.5, 1223, 654.5, NAVY);
    s += line(1223, 605.5, 1228, 605.5, NAVY) + line(1223, 616.5, 1228, 616.5, '#c87078') + line(1223, 648.5, 1228, 648.5, '#3aa04a');
    s += '<rect x="1228.5" y="600.5" width="47" height="14" fill="#fff" stroke="#c8c8c8"/><text x="1230" y="612" style="fill:#2a2a96">7,1048</text>';
    s += '<rect x="1228.5" y="609.5" width="47" height="14" fill="#fdf0f0" stroke="#c8c8c8"/><text x="1230" y="620" style="fill:#b4505a">6,1429</text>';
    s += tag(648, 47, '0,9619', '#5fb46a', '#fff');
    return s;
  }

  function axis() {
    var s = '';
    [['15:00',161],['16:00',304],['17:00',447],['10:00',686],['11:00',829],['12:00',972],['13:00',1115]].forEach(function (a) {
      s += line(a[1] + .5, 673, a[1] + .5, 677, '#aaa');
      s += '<text x="' + a[1] + '" y="689" text-anchor="middle">' + a[0] + '</text>';
    });
    s += line(543.5, 673, 543.5, 677, '#aaa');
    s += '<text class="day" x="542" y="689" text-anchor="middle">16</text>';
    return s;
  }

  var specs = { price: [57, 424, price], stoch: [481, 85, stoch], vol: [566, 32, vol], macd: [598, 75, macd], axis: [673, 20, axis] };
  Object.keys(specs).forEach(function (k) {
    var sp = specs[k], host = document.querySelector('[data-panel="' + k + '"]');
    var box = '<svg class="plot" width="1272" height="' + sp[1] + '" viewBox="4 ' + sp[0] + ' 1272 ' + sp[1] + '">' + sp[2]() + '</svg>';
    host.insertAdjacentHTML('afterbegin', box);
  });
})();
```
